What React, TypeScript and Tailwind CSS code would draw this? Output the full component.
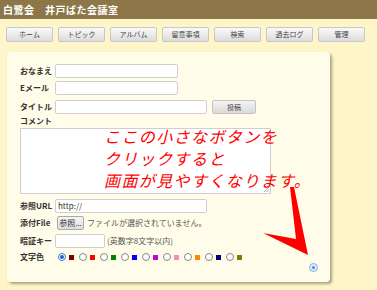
const navItems = ['ホーム', 'トピック', 'アルバム', '留意事項', '検索', '過去ログ', '管理'];

const colors = ['#800000', '#ff0000', '#008000', '#0000ff', '#cc00cc', '#ff88bb', '#ff8800', '#000080', '#808000'];

const font = { fontFamily: '"Noto Sans CJK JP", "Noto Sans", sans-serif' };

function Field({ label, children }: { label: string; children: React.ReactNode }) {
  return (
    <div className="flex items-center h-[14px]">
      <div className="w-[35px] text-[8px] font-bold text-[#333] leading-none whitespace-nowrap">{label}</div>
      {children}
    </div>
  );
}

export default function App() {
  return (
    <div className="w-[377px] h-[290px] bg-[#fef6c8] overflow-hidden relative" style={font}>
      {/* ヘッダー */}
      <div className="h-[19px] bg-[#8d7748] flex items-center px-[3px]">
        <span className="text-white text-[10px] font-bold tracking-[0.5px]">白鷺会　井戸ばた会議室</span>
      </div>

      {/* メニュー */}
      <div className="flex gap-[5px] pl-[6px] mt-[8px]">
        {navItems.map((item) => (
          <div
            key={item}
            className="w-[47px] h-[15px] flex items-center justify-center text-[7px] text-[#444] rounded-[2px] border border-[#c8c8c8] bg-gradient-to-b from-[#fafafa] to-[#dcdcdc]"
          >
            {item}
          </div>
        ))}
      </div>

      {/* 投稿フォーム */}
      <div className="relative ml-[7px] mt-[10px] w-[323px] h-[230px] bg-[#fffde9] rounded-[4px] shadow-[2px_2px_3px_rgba(0,0,0,0.35)] pl-[13px] pt-[12px]">
        <div className="flex flex-col gap-[3px]">
          <Field label="おなまえ">
            <div className="w-[123px] h-[14px] bg-white border border-[#cfcfcf] rounded-[2px]" />
          </Field>
          <Field label="Eメール">
            <div className="w-[123px] h-[14px] bg-white border border-[#cfcfcf] rounded-[2px]" />
          </Field>
          <div className="flex items-center h-[14px] mt-[2px]">
            <div className="w-[35px] text-[8px] font-bold text-[#333] leading-none">タイトル</div>
            <div className="w-[152px] h-[14px] bg-white border border-[#cfcfcf] rounded-[2px]" />
            <div className="ml-[5px] w-[44px] h-[14px] flex items-center justify-center text-[7px] text-[#444] border border-[#c4c4c4] rounded-[2px] bg-gradient-to-b from-[#f4f4f4] to-[#dadada]">
              投稿
            </div>
          </div>
        </div>

        <div className="mt-[2px] text-[8px] font-bold text-[#333] leading-[10px]">コメント</div>
        <div className="mt-[2px] w-[251px] h-[66px] bg-white border border-[#cfcfcf] relative">
          <svg className="absolute right-0 bottom-0" width="7" height="7" viewBox="0 0 7 7">
            <path d="M6 1L1 6M6 3.5L3.5 6M6 5.5L5.5 6" stroke="#999" strokeWidth="0.8" />
          </svg>
        </div>

        <div className="flex flex-col gap-[4px] mt-[5px]">
          <div className="flex items-center h-[13px]">
            <div className="w-[35px] text-[8px] font-bold text-[#333] leading-none">参照URL</div>
            <div className="w-[152px] h-[14px] bg-white border border-[#cfcfcf] rounded-[2px] flex items-center px-[2px] text-[8px] text-[#333]">
              http://
            </div>
          </div>
          <div className="flex items-center h-[14px]">
            <div className="w-[35px] text-[8px] font-bold text-[#333] leading-none">添付File</div>
            <div className="ml-[2px] w-[27px] h-[14px] flex items-center justify-center text-[8px] text-[#333] border border-[#aaa] rounded-[2px] bg-gradient-to-b from-[#f6f6f6] to-[#dedede]">
              参照...
            </div>
            <span className="ml-[3px] text-[8px] text-[#555] whitespace-nowrap">ファイルが選択されていません。</span>
          </div>
          <div className="flex items-center h-[14px]">
            <div className="w-[35px] text-[8px] font-bold text-[#333] leading-none">暗証キー</div>
            <div className="w-[50px] h-[14px] bg-white border border-[#cfcfcf] rounded-[2px]" />
            <span className="ml-[2px] text-[8px] text-[#555] whitespace-nowrap">(英数字8文字以内)</span>
          </div>
          <div className="flex items-center h-[10px]">
            <div className="w-[38px] text-[8px] font-bold text-[#333] leading-none">文字色</div>
            <div className="flex gap-[5px]">
              {colors.map((c, i) => (
                <div key={c} className="flex items-center gap-[3px]">
                  {i === 0 ? (
                    <div className="w-[8px] h-[8px] rounded-full border border-[#3a7bd5] bg-white flex items-center justify-center">
                      <div className="w-[4px] h-[4px] rounded-full bg-[#1a66d9]" />
                    </div>
                  ) : (
                    <div className="w-[8px] h-[8px] rounded-full border border-[#888] bg-white" />
                  )}
                  <div className="w-[5px] h-[5px]" style={{ backgroundColor: c }} />
                </div>
              ))}
            </div>
          </div>
        </div>

        {/* 文字サイズ切替ボタン */}
        <div className="absolute left-[302px] top-[211px] w-[9px] h-[9px] rounded-full border border-[#7fb1e0] bg-[#dcecfb] flex items-center justify-center">
          <div className="w-[3px] h-[3px] rounded-full bg-[#4c8fd6]" />
        </div>
      </div>

      {/* 説明の吹き出し */}
      <div
        className="absolute left-[104px] top-[125px] flex flex-col text-[16px] leading-[22px] text-[#ff0000] italic tracking-[1.4px] whitespace-nowrap"
        style={{ fontFamily: '"Noto Sans CJK JP", sans-serif' }}
      >
        <div className="h-[22px]">ここの小さなボタンを</div>
        <div className="h-[22px]">クリックすると</div>
        <div className="h-[22px]">画面が見やすくなります。</div>
      </div>
      <svg className="absolute left-0 top-0" width="377" height="290" viewBox="0 0 377 290">
        <polygon points="290,187 294,187 308,255 263,233 296,239" fill="#ff0000" />
      </svg>
    </div>
  );
}
